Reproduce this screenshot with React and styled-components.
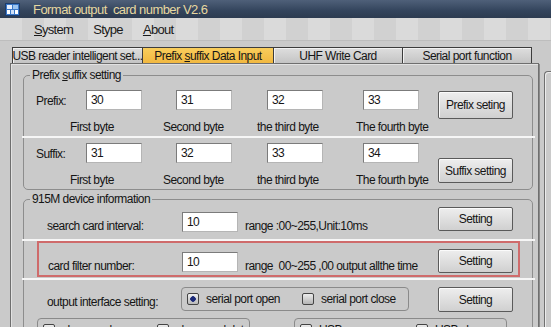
import React from 'react';
import styled, { createGlobalStyle } from 'styled-components';

const GlobalStyle = createGlobalStyle`
  html, body {
    margin: 0;
    padding: 0;
    overflow: hidden;
  }
  body {
    background: #cacaca;
    font-family: "Liberation Sans", Arial, sans-serif;
    color: #151515;
  }
`;

const prefixBytes = ['30', '31', '32', '33'];
const suffixBytes = ['31', '32', '33', '34'];
const captions = [
  { text: 'First byte', width: 93 },
  { text: 'Second byte', width: 94 },
  { text: 'the third byte', width: 99 },
  { text: 'The fourth byte', width: 80 },
];

const AppIcon = () => (
  <svg width="15" height="13" viewBox="0 0 15 13">
    <rect x="0.5" y="0.5" width="14" height="12" fill="#3a78c8" stroke="#1c3c6c" />
    <rect x="2" y="2" width="5" height="4" fill="#e8f0ff" />
    <rect x="8" y="2" width="5" height="4" fill="#9cc4f0" />
    <rect x="2" y="7" width="3" height="4" fill="#ffffff" />
    <rect x="6" y="7" width="3" height="4" fill="#cfe0f8" />
    <rect x="10" y="7" width="3" height="4" fill="#ffffff" />
  </svg>
);

const ByteSection = ({ label, values, button, buttonHeight, buttonAlign, top }) => (
  <Section $top={top}>
    <RowLabel>{label}</RowLabel>
    {values.map((v, i) => (
      <Cell key={i}>
        <Field>{v}</Field>
      </Cell>
    ))}
    <SectionButton $h={buttonHeight} $align={buttonAlign}>
      {button}
    </SectionButton>
    <CaptionRow>
      {captions.map(c => (
        <Caption key={c.text} $w={c.width}>
          {c.text}
        </Caption>
      ))}
    </CaptionRow>
  </Section>
);

const App = () => {
  return (
    <Window>
      <GlobalStyle />
      <TitleBar>
        <AppIcon />
        <TitleText>Format output&nbsp; card number V2.6</TitleText>
      </TitleBar>

      <MenuBar>
        <MenuItem>
          <u>S</u>ystem
        </MenuItem>
        <MenuItem>Stype</MenuItem>
        <MenuItem>
          <u>A</u>bout
        </MenuItem>
      </MenuBar>

      <Body>
        <Main>
          <TabStrip>
            <Tab $w={131}>
              <span>USB reader intelligent set...</span>
            </Tab>
            <Tab $w={132} $active>
              <span>
                Prefix <u>s</u>uffix Data Input
              </span>
            </Tab>
            <Tab $w={130}>
              <span>UHF Write Card</span>
            </Tab>
            <Tab $w={130}>
              <span>Serial port function</span>
            </Tab>
          </TabStrip>

          <Panel>
            <Group>
              <Legend>
                Prefix <u>s</u>uffix setting
              </Legend>
              <ByteSection
                label="Prefix:"
                values={prefixBytes}
                button="Prefix seting"
                buttonHeight={28}
                buttonAlign="start"
                top={8}
              />
              <Divider />
              <ByteSection
                label="Suffix:"
                values={suffixBytes}
                button="Suffix setting"
                buttonHeight={25}
                buttonAlign="end"
                top={5}
              />
            </Group>

            <Group $gap>
              <Legend>915M device information</Legend>
              <InfoRow>
                <InfoLabel>search card interval:</InfoLabel>
                <InfoField>10</InfoField>
                <InfoText>range :00~255,Unit:10ms</InfoText>
                <InfoButton>Setting</InfoButton>
              </InfoRow>
              <Divider $top={6} />
              <Highlight>
                <InfoRow $inset>
                  <InfoLabel $w={134} $top={10}>
                    card filter number:
                  </InfoLabel>
                  <InfoField $top={3}>10</InfoField>
                  <InfoText $top={10}>range&nbsp; 00~255 ,00 output allthe time</InfoText>
                  <InfoButton>Setting</InfoButton>
                </InfoRow>
              </Highlight>
              <Divider $top={1} />
              <OutputRow>
                <InfoLabel $top={8}>output interface setting:</InfoLabel>
                <ChoiceBox>
                  <Choice $w={115}>
                    <Tick $on />
                    serial port open
                  </Choice>
                  <Choice>
                    <Tick />
                    serial port close
                  </Choice>
                </ChoiceBox>
                <InfoButton $h={25}>Setting</InfoButton>
              </OutputRow>
              <BottomRow>
                <SubBox $w={213}>
                  <Choice $w={114}>
                    <Tick />
                    show card no
                  </Choice>
                  <Choice>
                    <Tick />
                    show card data
                  </Choice>
                </SubBox>
                <SubBox $w={213}>
                  <Choice $w={116}>
                    <Tick />
                    USB open
                  </Choice>
                  <Choice>
                    <Tick />
                    USB close
                  </Choice>
                </SubBox>
              </BottomRow>
            </Group>
          </Panel>
        </Main>
        <RightRail>
          <RailBox />
        </RightRail>
      </Body>
    </Window>
  );
};

const Window = styled.div`
  width: 551px;
  height: 327px;
  overflow: hidden;
  display: flex;
  flex-direction: column;
  background: #cacaca;
  font-size: 12px;
  letter-spacing: -0.55px;
`;

const TitleBar = styled.div`
  height: 18px;
  flex: none;
  display: flex;
  align-items: center;
  gap: 13px;
  padding-left: 5px;
  background: linear-gradient(#4f6079, #33445c 60%, #2c3b50);
`;

const TitleText = styled.span`
  font-size: 13px;
  letter-spacing: -0.55px;
  color: #e6d8a0;
  white-space: nowrap;
`;

const MenuBar = styled.div`
  height: 22px;
  flex: none;
  display: flex;
  align-items: center;
  gap: 20px;
  padding-left: 34px;
  background: repeating-linear-gradient(
    90deg,
    #dadada 0 22px,
    #d1d1d1 22px 44px
  );
  border-bottom: 1px solid #bdbdbd;
`;

const MenuItem = styled.span`
  font-size: 13px;
  letter-spacing: -0.7px;
  color: #1a1a1a;
`;

const Body = styled.div`
  flex: 1;
  display: flex;
  padding-left: 10px;
`;

const Main = styled.div`
  width: 529px;
  display: flex;
  flex-direction: column;
`;

const TabStrip = styled.div`
  display: flex;
  height: 16px;
  margin-top: 6px;
  padding-left: 3px;
`;

const Tab = styled.div`
  width: ${p => p.$w}px;
  box-sizing: border-box;
  display: flex;
  align-items: center;
  justify-content: center;
  white-space: nowrap;
  overflow: hidden;
  border: 1px solid #3c3c3c;
  border-bottom: none;
  margin-left: -1px;
  padding-top: 1px;
  background: ${p =>
    p.$active
      ? 'linear-gradient(#f9cd5c, #f1b840)'
      : 'linear-gradient(#dedede, #c4c4c4)'};
  box-shadow: ${p => (p.$active ? 'none' : 'inset 1px 1px 0 #f2f2f2')};
  position: relative;
  z-index: ${p => (p.$active ? 1 : 0)};
`;

const Panel = styled.div`
  flex: 1;
  border: 1px solid #6f6f6f;
  border-bottom: none;
  box-shadow: inset 1px 1px 0 #e2e2e2;
  padding: 4px 5px 0 12px;
`;

const Group = styled.fieldset`
  margin: ${p => (p.$gap ? '2px' : '0')} 0 0;
  padding: 0 0 2px;
  border: 1px solid #8d8d8d;
  border-radius: 5px;
  min-width: 0;
`;

const Legend = styled.legend`
  margin-left: 6px;
  padding: 0 2px;
  line-height: 14px;
  font-size: 12px;
`;

const Section = styled.div`
  display: grid;
  grid-template-columns: 50px 90px 91px 96px 75px 75px;
  grid-template-rows: 20px 10px 14px;
  padding: ${p => p.$top}px 0 0 12px;
`;

const RowLabel = styled.div`
  grid-row: 1;
  align-self: center;
  padding-top: 2px;
`;

const Cell = styled.div`
  grid-row: 1;
`;

const Field = styled.div`
  width: 56px;
  height: 20px;
  box-sizing: border-box;
  background: #fff;
  border: 1px solid #7b7b7b;
  border-right-color: #b5b5b5;
  border-bottom-color: #b5b5b5;
  padding-left: 4px;
  line-height: 18px;
`;

const Button = styled.div`
  box-sizing: border-box;
  display: flex;
  align-items: center;
  justify-content: center;
  white-space: nowrap;
  border: 1px solid #5a5a5a;
  border-radius: 2px;
  background: linear-gradient(#eeeeee, #d0d0d0);
  box-shadow: inset 1px 1px 0 #fbfbfb;
`;

const SectionButton = styled(Button)`
  grid-column: 6;
  grid-row: 1 / 4;
  width: 75px;
  height: ${p => p.$h}px;
  align-self: ${p => p.$align};
  margin: ${p => (p.$align === 'start' ? '1px 0 0' : '0 0 4px')};
`;

const CaptionRow = styled.div`
  grid-column: 1 / 6;
  grid-row: 3;
  display: flex;
  padding-left: 34px;
  line-height: 14px;
`;

const Caption = styled.span`
  width: ${p => p.$w}px;
  flex: none;
  white-space: nowrap;
`;

const Divider = styled.div`
  height: 2px;
  background: #f6f6f6;
  margin: ${p => p.$top || 2}px -3px 0 -2px;
`;

const InfoRow = styled.div`
  display: grid;
  grid-template-columns: ${p => (p.$inset ? '134px' : '135px')} 56px 1fr 75px;
  align-items: start;
  padding: ${p => (p.$inset ? '6px 5px 2px 9px' : '1px 19px 0 23px')};
`;

const InfoLabel = styled.div`
  width: ${p => p.$w || 135}px;
  margin-top: ${p => p.$top ?? 12}px;
  line-height: 14px;
  white-space: nowrap;
`;

const InfoField = styled(Field)`
  margin-top: ${p => p.$top ?? 5}px;
`;

const InfoText = styled.div`
  margin-top: ${p => p.$top ?? 12}px;
  padding-left: 7px;
  line-height: 14px;
  white-space: nowrap;
`;

const InfoButton = styled(Button)`
  width: 75px;
  height: ${p => p.$h || 24}px;
`;

const Highlight = styled.div`
  margin: 0 12px 0 13px;
  border: 2px solid #cf6b6b;
`;

const OutputRow = styled.div`
  display: grid;
  grid-template-columns: 134px 228px 1fr 75px;
  align-items: start;
  padding: 7px 19px 0 23px;

  & > ${Button} {
    grid-column: 4;
  }
`;

const ChoiceBox = styled.div`
  height: 24px;
  box-sizing: border-box;
  display: flex;
  align-items: center;
  padding-left: 5px;
  border: 1px solid #8a8a8a;
  border-radius: 4px;
`;

const Choice = styled.div`
  display: flex;
  align-items: center;
  gap: 7px;
  white-space: nowrap;
  flex: none;
  width: ${p => (p.$w ? `${p.$w}px` : 'auto')};
`;

const Tick = styled.span`
  width: 12px;
  height: 12px;
  box-sizing: border-box;
  border: 1px solid #444;
  border-radius: 2px;
  background: ${p =>
    p.$on
      ? 'radial-gradient(circle, #1c2a78 0 2.5px, transparent 3px), linear-gradient(#f0f0f0, #b9b9b9)'
      : 'linear-gradient(#ececec, #b4b4b4)'};
  flex: none;
`;

const BottomRow = styled.div`
  display: flex;
  gap: 44px;
  padding: 6px 0 0 13px;
`;

const SubBox = styled.div`
  width: ${p => p.$w}px;
  height: 26px;
  box-sizing: border-box;
  display: flex;
  align-items: flex-start;
  padding: 4px 0 0 5px;
  border: 1px solid #8a8a8a;
  border-radius: 4px;
  overflow: hidden;
`;

const RightRail = styled.div`
  flex: 1;
  display: flex;
  padding: 7px 0 0 4px;
  border-left: 1px solid #8a8a8a;
  margin-top: 23px;
`;

const RailBox = styled.div`
  flex: 1;
  border: 1px solid #6f6f6f;
  border-right: none;
  border-bottom: none;
  border-top-left-radius: 4px;
  box-shadow: inset 1px 1px 0 #ececec;
`;

export default App;
